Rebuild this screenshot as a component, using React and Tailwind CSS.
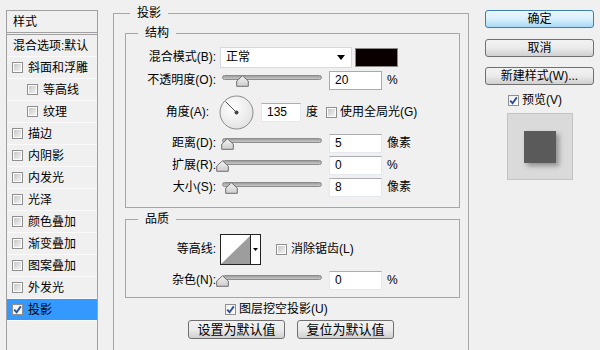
import React from 'react';

const sideItems = [
  { label: '斜面和浮雕' },
  { label: '等高线', indent: true },
  { label: '纹理', indent: true },
  { label: '描边' },
  { label: '内阴影' },
  { label: '内发光' },
  { label: '光泽' },
  { label: '颜色叠加' },
  { label: '渐变叠加' },
  { label: '图案叠加' },
  { label: '外发光' },
  { label: '投影', checked: true, active: true },
];

const Check = ({ checked }) =>
  checked ? (
    <span className="flex h-[11px] w-[11px] shrink-0 items-center justify-center border border-[#8f8f8f] bg-gradient-to-br from-[#f0f0f0] to-white">
      <svg width="9" height="9" viewBox="0 0 9 9">
        <path d="M1.2 4.6 L3.6 7.2 L7.8 1.4" fill="none" stroke="#2c4f9e" strokeWidth="1.9" />
      </svg>
    </span>
  ) : (
    <span className="flex h-[11px] w-[11px] shrink-0 border border-[#8f8f8f] bg-white p-[1px]">
      <span className="h-full w-full bg-gradient-to-br from-[#c9c9c9] to-[#f2f2f2]" />
    </span>
  );

const Slider = ({ pos }) => (
  <div className="relative h-[16px] w-[106px] shrink-0">
    <div className="absolute left-[6px] right-0 top-[3px] h-[5px] rounded-full border border-[#8c8c8c] bg-gradient-to-b from-[#9d9d9d] to-[#c9c9c9]" />
    <svg className="absolute top-[3px]" style={{ left: pos }} width="13" height="12" viewBox="0 0 13 12">
      <defs>
        <linearGradient id="thumb" x1="0" y1="0" x2="0" y2="1">
          <stop offset="0" stopColor="#f4f4f4" />
          <stop offset="1" stopColor="#cdcdcd" />
        </linearGradient>
      </defs>
      <path d="M6.5 0.8 L12.3 6 L12.3 11.3 L0.7 11.3 L0.7 6 Z" fill="url(#thumb)" stroke="#6e6e6e" />
    </svg>
  </div>
);

const Field = ({ value, w = 'w-[53px]', focus }) => (
  <div
    className={`flex h-[19px] shrink-0 items-center bg-white pl-[5px] text-[12px] ${w} ${
      focus ? 'border border-[#7eb4ea]' : 'border border-[#e3e9ef] border-t-[#abadb3]'
    }`}
  >
    {value}
  </div>
);

const SliderRow = ({ label, pos, value, unit, h = 'h-[22px]', focus }) => (
  <div className={`flex items-center ${h}`}>
    <div className="w-[90px] shrink-0 text-right">{label}</div>
    <Slider pos={pos} />
    <div className="ml-[7px]">
      <Field value={value} focus={focus} />
    </div>
    <span className="ml-[5px]">{unit}</span>
  </div>
);

const Button = ({ children, primary, className = '' }) => (
  <div
    className={`flex items-center justify-center rounded-[3px] border leading-none ${
      primary
        ? 'border-[#3c7fb1] bg-gradient-to-b from-[#eaf6fd] via-[#d9f0fc] to-[#a7d9f5]'
        : 'border-[#707070] bg-gradient-to-b from-[#f2f2f2] via-[#ebebeb] to-[#cfcfcf]'
    } ${className}`}
  >
    {children}
  </div>
);

export default function App() {
  return (
    <div className="flex h-[350px] w-[600px] overflow-hidden bg-[#f0f0f0] font-['Liberation_Sans','Noto_Sans_CJK_SC',sans-serif] text-[12px] text-black">
      {/* Style list */}
      <div className="ml-[6px] mt-[10px] flex h-[360px] w-[92px] shrink-0 flex-col border border-[#a0a0a0]">
        <div className="flex h-[22px] items-center border-b border-[#a0a0a0] pl-[6px]">样式</div>
        <div className="mt-[1px] border-t border-[#a0a0a0]">
          <div className="flex h-[22px] items-center border-b border-[#fafafa] pl-[6px] whitespace-nowrap">混合选项:默认</div>
          {sideItems.map((it) => (
            <div
              key={it.label}
              className={`flex h-[22px] items-center border-b border-[#fafafa] ${it.indent ? 'pl-[20px]' : 'pl-[5px]'} ${
                it.active ? 'bg-[#3399ff]' : ''
              }`}
            >
              <Check checked={it.checked} />
              <span className="ml-[5px]">{it.label}</span>
            </div>
          ))}
        </div>
      </div>

      {/* Drop shadow settings */}
      <fieldset className="ml-[15px] mt-[5px] w-[356px] shrink-0 self-start border border-[#a6a6a6] pb-[20px]">
        <legend className="ml-[16px] px-[7px] leading-[16px]">投影</legend>

        <fieldset className="ml-[11px] mt-[4px] w-[335px] border border-[#a6a6a6] pb-[9px] pt-[5px]">
          <legend className="ml-[12px] px-[7px] leading-[16px]">结构</legend>

          <div className="flex h-[22px] items-center">
            <div className="w-[90px] shrink-0 text-right">混合模式(B):</div>
            <div className="ml-[4px] flex h-[21px] w-[132px] items-center justify-between border border-[#d5d9e0] bg-white pl-[5px] pr-[6px]">
              <span>正常</span>
              <svg width="8" height="5" viewBox="0 0 8 5">
                <path d="M0 0 H8 L4 5 Z" fill="#000" />
              </svg>
            </div>
            <div className="ml-[3px] h-[19px] w-[43px] border border-[#8a8a8a] bg-[#0a0000]" />
          </div>

          <SliderRow label="不透明度(O):" pos={20} value="20" unit="%" h="h-[24px]" focus />

          <div className="flex h-[40px] items-center">
            <div className="w-[90px] shrink-0 pr-[7px] text-right">角度(A):</div>
            <svg className="ml-[3px] shrink-0" width="35" height="35" viewBox="0 0 35 35">
              <defs>
                <radialGradient id="dial" cx="0.4" cy="0.35" r="0.7">
                  <stop offset="0" stopColor="#ffffff" />
                  <stop offset="1" stopColor="#e2e2e2" />
                </radialGradient>
              </defs>
              <circle cx="17.5" cy="17.5" r="16.5" fill="url(#dial)" stroke="#8a8a8a" />
              <line x1="17.5" y1="17.5" x2="6.5" y2="6.5" stroke="#555" strokeWidth="1" />
              <circle cx="17.5" cy="17.5" r="2" fill="#444" />
            </svg>
            <div className="ml-[7px]">
              <Field value="135" w="w-[40px]" />
            </div>
            <span className="ml-[5px]">度</span>
            <span className="ml-[8px]">
              <Check />
            </span>
            <span className="ml-[3px]">使用全局光(G)</span>
          </div>

          <SliderRow label="距离(D):" pos={5} value="5" unit="像素" />
          <SliderRow label="扩展(R):" pos={0} value="0" unit="%" />
          <SliderRow label="大小(S):" pos={9} value="8" unit="像素" />
        </fieldset>

        <fieldset className="ml-[11px] mt-[3px] w-[335px] border border-[#a6a6a6] pb-[6px] pt-[5px]">
          <legend className="ml-[12px] px-[7px] leading-[16px]">品质</legend>

          <div className="flex h-[34px] items-center">
            <div className="w-[90px] shrink-0 text-right">等高线:</div>
            <div className="ml-[4px] flex h-[31px] w-[41px] shrink-0 border border-[#222] bg-white">
              <svg width="29" height="29" viewBox="0 0 29 29" className="shrink-0">
                <path d="M0 29 L29 1 L29 29 Z" fill="#9d9d9d" />
              </svg>
              <div className="flex flex-1 items-center justify-center border-l border-[#222]">
                <svg width="5" height="3" viewBox="0 0 5 3">
                  <path d="M0 0 H5 L2.5 3 Z" fill="#000" />
                </svg>
              </div>
            </div>
            <span className="ml-[15px]">
              <Check />
            </span>
            <span className="ml-[4px]">消除锯齿(L)</span>
          </div>

          <SliderRow label="杂色(N):" pos={0} value="0" unit="%" h="mt-[3px] h-[22px]" />
        </fieldset>

        <div className="mt-[1px] flex h-[20px] items-center pl-[111px]">
          <Check checked />
          <span className="ml-[3px]">图层挖空投影(U)</span>
        </div>

        <div className="mt-[1px] flex justify-center gap-[12px] text-[13px]">
          <Button className="h-[19px] w-[97px]">设置为默认值</Button>
          <Button className="h-[19px] w-[97px]">复位为默认值</Button>
        </div>
      </fieldset>

      {/* Buttons and preview */}
      <div className="ml-[16px] mt-[10px] flex w-[109px] shrink-0 flex-col">
        <Button primary className="h-[18px] w-[109px]">确定</Button>
        <Button className="mt-[11px] h-[18px] w-[109px]">取消</Button>
        <Button className="mt-[10px] h-[18px] w-[109px]">新建样式(W)...</Button>
        <div className="mt-[7px] flex h-[16px] items-center pl-[23px]">
          <Check checked />
          <span className="ml-[3px]">预览(V)</span>
        </div>
        <div className="ml-[22px] mt-[5px] flex h-[67px] w-[66px] items-center justify-center border border-[#c4c4c4] bg-[#dadada]">
          <div className="h-[32px] w-[32px] bg-[#5a5a5a] shadow-[3px_3px_5px_rgba(0,0,0,0.35)]" />
        </div>
      </div>
    </div>
  );
}
